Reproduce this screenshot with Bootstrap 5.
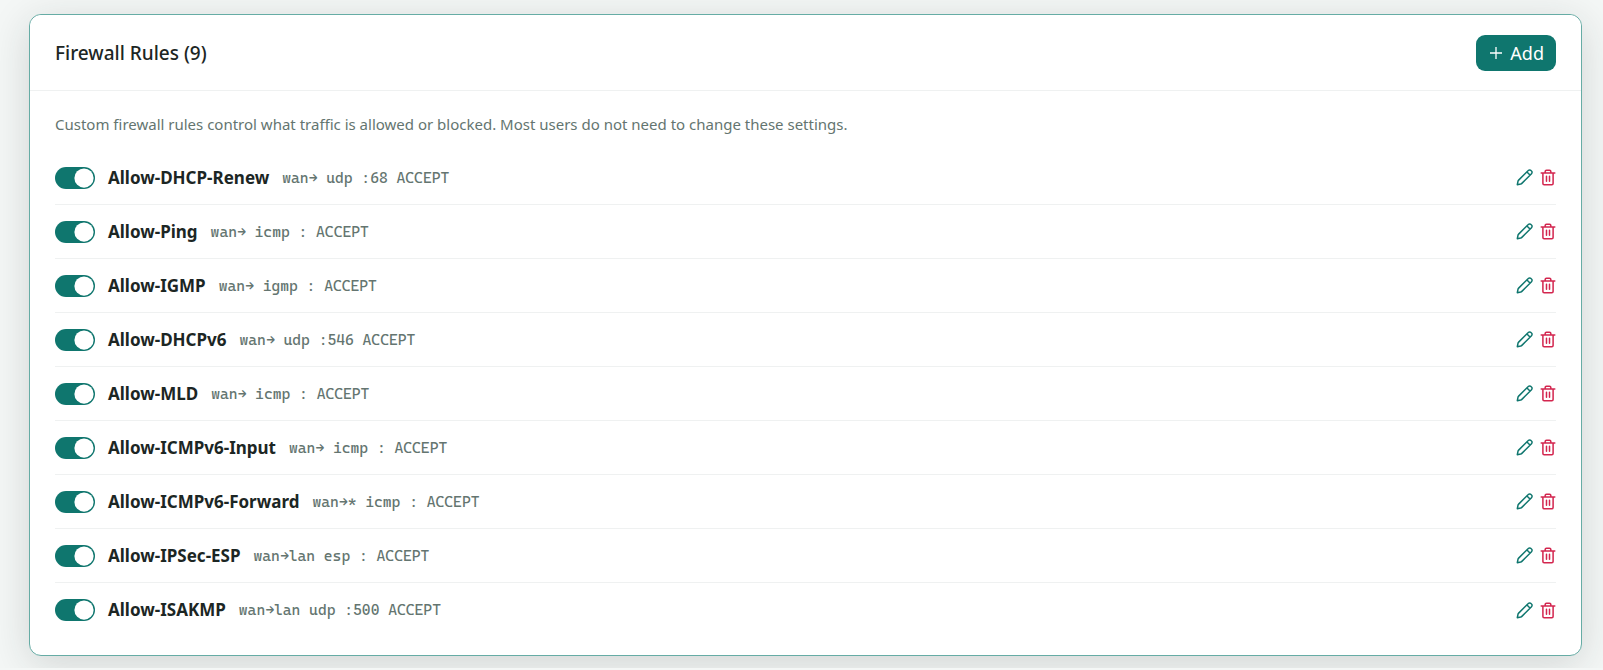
<!DOCTYPE html>
<html lang="en">
<head>
<meta charset="utf-8">
<meta name="viewport" content="width=device-width, initial-scale=1">
<title>Firewall Rules</title>
<link href="https://cdn.jsdelivr.net/npm/bootstrap@5.3.0/dist/css/bootstrap.min.css" rel="stylesheet">
<style>
  :root { --teal: #0f766e; --ink: #1c2624; --soft: #647570; --line: #eff1f1; }
  body { background: #f4f7f6; color: var(--ink); font-family: "Segoe UI", "Noto Sans", "Open Sans", sans-serif; padding: 14px 21px 12px 29px; }
  .rules-card { border: 1px solid #66aca5; border-radius: 12px; box-shadow: 0 8px 40px rgba(28, 38, 36, .16); }
  .rules-card .card-header { background: #fff; border-bottom: 1px solid var(--line); border-radius: 12px 12px 0 0; padding: 20px 25px 19px; }
  .rules-card .card-body { padding: 20px 25px 18px; }
  .rules-title { font-size: 19px; line-height: 24px; font-weight: 500; }
  .btn-add { --bs-btn-color: #fff; --bs-btn-bg: var(--teal); --bs-btn-hover-color: #fff; --bs-btn-hover-bg: #0c5f59; --bs-btn-active-bg: #0c5f59; --bs-btn-active-color: #fff; border: 0; border-radius: 9px; padding: 0 12px 0 14px; height: 36px; font-size: 18px; line-height: 24px; }
  .intro { color: var(--soft); font-size: 15px; line-height: 26px; margin-bottom: 14px; }
  .rule { height: 54px; border-bottom: 1px solid var(--line); }
  .rule:last-child { border-bottom: 0; }
  .rule-main, .rule .form-check { gap: 13px; }
  .rule .form-check { min-height: 0; margin: 0; padding: 0; }
  .rule .form-check-input { float: none; flex: none; margin: 0; width: 40px; height: 22px; border: 0; --bs-form-switch-bg: url("data:image/svg+xml,%3csvg xmlns='http://www.w3.org/2000/svg' viewBox='-4 -4 8 8'%3e%3ccircle r='3.5' fill='%23fff'/%3e%3c/svg%3e") !important; background-color: #cbd5d2; }
  .rule .form-check-input:checked { background-color: var(--teal); }
  .rule-name { font-size: 17px; line-height: 24px; font-weight: 700; }
  .rule-spec { color: var(--soft); font: 15px/24px "Cascadia Mono", "Liberation Mono", monospace; }
  .rule-actions { gap: 7px; }
  .btn-icon { border: 0; padding: 0; line-height: 0; color: var(--teal); }
  .btn-icon:hover { color: #0c5f59; }
  .btn-icon.remove { color: #d3264f; }
</style>
</head>
<body>
<svg class="d-none" xmlns="http://www.w3.org/2000/svg">
  <symbol id="pencil" viewBox="0 0 18 18"><path d="M12.2 2.4 13 1.6a2 2 0 0 1 2.9 0l.5.5a2 2 0 0 1 0 2.9L6.2 15.2Q5.7 15.7 5 15.9L1.4 16.6 2.1 13Q2.3 12.3 2.8 11.8zM11.6 3.2l3.2 3.2" fill="none" stroke="currentColor" stroke-width="1.6" stroke-linejoin="round"/></symbol>
  <symbol id="trash" viewBox="0 0 16 18"><path d="M.8 4.2h14.4M2.6 4.2v11.2q0 1.3 1.3 1.3h8.2q1.3 0 1.3-1.3V4.2M5 4V2.6Q5 1.2 6.4 1.2h3.2Q11 1.2 11 2.6V4M6.4 7.6v5.4M9.6 7.6v5.4" fill="none" stroke="currentColor" stroke-width="1.6" stroke-linecap="round" stroke-linejoin="round"/></symbol>
</svg>
<main class="card rules-card">
  <div class="card-header d-flex align-items-center justify-content-between">
    <h1 class="rules-title mb-0">Firewall Rules (9)</h1>
    <button type="button" class="btn btn-add d-flex align-items-center gap-2">
      <svg width="12" height="12" viewBox="0 0 12 12" aria-hidden="true"><path d="M6 0v12M0 6h12" stroke="currentColor" stroke-width="1.3"/></svg>Add
    </button>
  </div>
  <div class="card-body">
    <p class="intro">Custom firewall rules control what traffic is allowed or blocked. Most users do not need to change these settings.</p>
    <ul class="list-unstyled mb-0" id="rules"></ul>
  </div>
</main>
<script src="https://cdn.jsdelivr.net/npm/bootstrap@5.3.0/dist/js/bootstrap.bundle.min.js"></script>
<script>
  const rules = [
    ["Allow-DHCP-Renew", "wan→ udp :68 ACCEPT"],
    ["Allow-Ping", "wan→ icmp : ACCEPT"],
    ["Allow-IGMP", "wan→ igmp : ACCEPT"],
    ["Allow-DHCPv6", "wan→ udp :546 ACCEPT"],
    ["Allow-MLD", "wan→ icmp : ACCEPT"],
    ["Allow-ICMPv6-Input", "wan→ icmp : ACCEPT"],
    ["Allow-ICMPv6-Forward", "wan→* icmp : ACCEPT"],
    ["Allow-IPSec-ESP", "wan→lan esp : ACCEPT"],
    ["Allow-ISAKMP", "wan→lan udp :500 ACCEPT"]
  ];
  document.getElementById("rules").innerHTML = rules.map(([name, spec], i) => `
    <li class="rule d-flex align-items-center justify-content-between">
      <div class="rule-main d-flex align-items-center">
        <div class="form-check form-switch d-flex align-items-center">
          <input class="form-check-input" type="checkbox" role="switch" id="rule${i}" checked>
          <label class="rule-name" for="rule${i}">${name}</label>
        </div>
        <span class="rule-spec">${spec}</span>
      </div>
      <div class="rule-actions d-flex align-items-center">
        <button type="button" class="btn btn-icon" aria-label="Edit ${name}"><svg width="17" height="17"><use href="#pencil"/></svg></button>
        <button type="button" class="btn btn-icon remove" aria-label="Delete ${name}"><svg width="16" height="17"><use href="#trash"/></svg></button>
      </div>
    </li>`).join("");
</script>
</body>
</html>
